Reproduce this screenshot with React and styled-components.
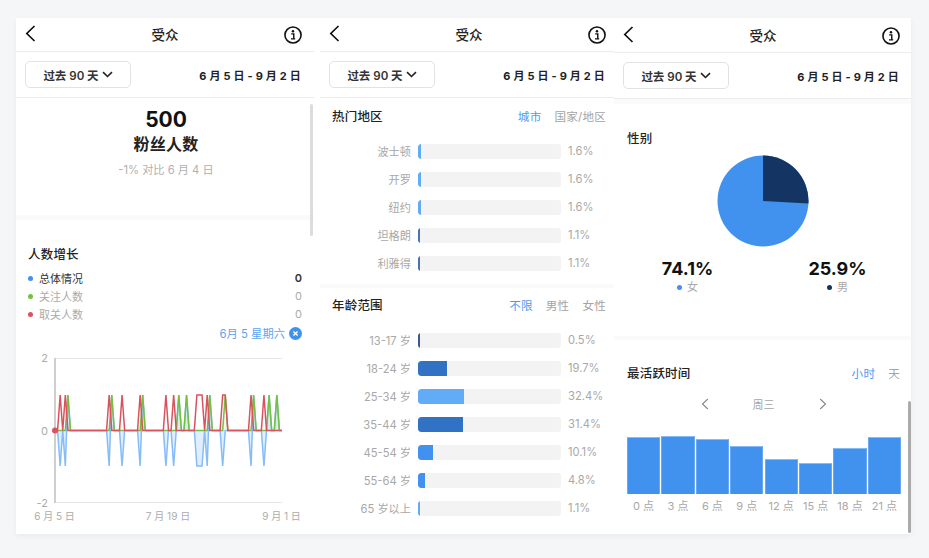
import React from 'react';
import styled, { createGlobalStyle } from 'styled-components';

const Global = createGlobalStyle`
  html, body { margin: 0; padding: 0; background: #f5f6f8; }
  body { font-family: Inter, "Noto Sans CJK SC", sans-serif; color: #262626; -webkit-font-smoothing: antialiased; }
  * { box-sizing: border-box; }
`;

const Page = styled.div`
  width: 929px; height: 558px; padding: 18px 18px 24px 16px; overflow: hidden;
`;
const Card = styled.div`
  position: relative; display: flex; width: 895px; height: 516px; background: #fff;
  box-shadow: 0 2px 6px rgba(0,0,0,.05); overflow: hidden;
`;
const Panel = styled.div`
  flex: none; width: ${p => p.$w}px; padding-top: ${p => p.$top || 0}px; overflow: hidden;
`;
const Screen = styled.div`
  width: 298px; display: flex; flex-direction: column;
`;
const Header = styled.div`
  height: 34px; border-bottom: 1px solid #ececec; display: flex; align-items: center;
  justify-content: space-between; padding: 0 12px 0 9px; position: relative;
`;
const BackSlot = styled.span`
  display: flex; margin-bottom: 3px;
`;
const HeaderTitle = styled.div`
  flex: 1; text-align: center; font-size: 13.5px; font-weight: 500; line-height: 20px; color: #222; padding-left: 10px;
`;
const FilterRow = styled.div`
  height: 46px; border-bottom: 1px solid #ececec; display: flex; align-items: center;
  justify-content: space-between; padding: 0 13px 0 9px;
`;
const RangeButton = styled.div`
  width: 106px; height: 27px; border: 1px solid #e2e2e2; border-radius: 5px; display: flex;
  align-items: center; justify-content: center; gap: 3px; font-size: 11.5px; font-weight: 600; color: #333;
`;
const DateRange = styled.div`
  font-size: 11px; font-weight: 700; letter-spacing: .2px; color: #222;
`;
const Summary = styled.section`
  height: 117px; padding: 10px 0 0 2px; text-align: center;
`;
const BigNumber = styled.div`
  font-size: 21px; font-weight: 700; line-height: 24px; color: #111;
`;
const BigLabel = styled.div`
  margin-top: 1px; font-size: 16px; font-weight: 600; line-height: 22px; letter-spacing: .3px; color: #222;
`;
const Delta = styled.div`
  margin-top: 7px; font-size: 11.2px; line-height: 16px; color: #b0b0b0;
`;
const Band = styled.div`
  height: ${p => p.$h}px; background: #fafafa; flex: none;
`;
const Section = styled.section`
  height: ${p => p.$h}px; padding: ${p => p.$pt}px 12px 0 ${p => p.$pl || 12}px; flex: none;
`;
const TitleRow = styled.div`
  display: flex; align-items: center; justify-content: space-between; height: 20px;
`;
const SectionTitle = styled.h3`
  margin: 0; font-size: 12.5px; font-weight: 500; line-height: 20px; color: #222; letter-spacing: .2px;
`;
const Tabs = styled.div`
  display: flex; gap: 13px;
`;
const Tab = styled.span`
  font-size: 11.6px; line-height: 20px; letter-spacing: .2px; color: ${p => p.$active ? '#4a9bf2' : '#a4a4a4'};
`;
const Legend = styled.div`
  margin-top: 4px;
`;
const LegendRow = styled.div`
  display: flex; align-items: center; height: 18px; font-size: 11px; color: ${p => p.$strong ? '#333' : '#aaa'};
`;
const Dot = styled.i`
  width: 5px; height: 5px; border-radius: 50%; background: ${p => p.$c}; margin-right: 6px; flex: none;
`;
const LegendValue = styled.span`
  margin-left: auto; font-size: 11px; font-weight: ${p => p.$strong ? 600 : 400};
`;
const Selected = styled.div`
  margin-top: 1px; height: 18px; display: flex; align-items: center; justify-content: flex-end; gap: 4px;
  font-size: 11.3px; color: #5ba4f3;
`;
const Clear = styled.svg`
  width: 13px; height: 13px; flex: none;
`;
const ChartSvg = styled.svg`
  display: block; width: 298px; height: 181px; margin: 3px -12px 0; overflow: visible;
`;
const Rows = styled.div`
  display: flex; flex-direction: column; gap: 13px; margin-top: ${p => p.$mt}px;
`;
const BarRow = styled.div`
  display: grid; grid-template-columns: 79px 143px auto; column-gap: 7px; align-items: center; height: 15px;
  font-size: 11.2px; color: #a8a8a8;
`;
const BarLabel = styled.span`
  text-align: right;
`;
const Track = styled.div`
  height: 15px; border-radius: 3px; background: #f3f3f4; overflow: hidden;
`;
const Fill = styled.div`
  height: 100%; background: ${p => p.$c}; border-radius: 3px 0 0 3px;
`;
const SubTitle = styled.div`
  height: 20px;
`;
const PieWrap = styled.div`
  display: flex; justify-content: center; margin: 6px 0 0 -1px;
`;
const Stats = styled.div`
  display: grid; grid-template-columns: 1fr 1fr; margin: 11px -12px 0 -13px;
`;
const Stat = styled.div`
  text-align: center; transform: translateX(${p => p.$dx}px);
`;
const StatValue = styled.div`
  font-size: 18px; font-weight: 700; line-height: 22px; color: #111;
`;
const StatLabel = styled.div`
  display: flex; align-items: center; justify-content: center; gap: 4px; font-size: 11px; line-height: 14px; color: #aaa;
`;
const SmallDot = styled.i`
  width: 5px; height: 5px; border-radius: 50%; background: ${p => p.$c}; margin-right: 1px;
`;
const DayNav = styled.div`
  margin-top: 10px; display: flex; align-items: center; justify-content: center; gap: 44px; height: 20px;
  font-size: 11px; color: #a6a6a6;
`;
const Bars = styled.div`
  margin-top: 20px; height: 60px; display: grid; grid-template-columns: repeat(8, 1fr); column-gap: 1.3px; align-items: end;
  margin-right: -1px;
`;
const Bar = styled.div`
  background: #4192ef; border-top: 1px solid #86bbf5; border-left: 1px solid #6aa9f2; border-right: 1px solid #6aa9f2;
`;
const BarTicks = styled.div`
  margin-top: 5px; display: grid; grid-template-columns: repeat(8, 1fr); column-gap: 1.3px; margin-right: -1px;
`;
const Tick = styled.span`
  text-align: center; font-size: 11px; line-height: 14px; color: #a8a8a8; white-space: nowrap;
`;
const ScrollThumb = styled.div`
  position: absolute; left: ${p => p.$x}px; top: ${p => p.$y}px; width: 3px; height: 132px;
  background: ${p => p.$c}; border-radius: 2px;
`;

const Back = () => (
  <svg width="11" height="17" viewBox="0 0 11 17" fill="none">
    <path d="M9.5 1 L1.8 8.5 L9.5 16" stroke="#111" strokeWidth="1.7" />
  </svg>
);
const InfoIcon = () => (
  <svg width="18" height="18" viewBox="0 0 19 19" fill="none">
    <circle cx="9.5" cy="9.5" r="8.5" stroke="#111" strokeWidth="1.7" />
    <circle cx="9.5" cy="5.6" r="1.3" fill="#111" />
    <path d="M7.6 8.3h2.7v5.1M7.4 13.6h4.4" stroke="#111" strokeWidth="1.5" />
  </svg>
);
const Chevron = () => (
  <svg width="11" height="7" viewBox="0 0 11 7" fill="none">
    <path d="M1 1.2 L5.5 5.5 L10 1.2" stroke="#222" strokeWidth="1.6" />
  </svg>
);
const NavArrow = ({ left }) => (
  <svg width="8" height="12" viewBox="0 0 8 12" fill="none">
    <path d={left ? 'M6.8 1 L1.5 6 L6.8 11' : 'M1.2 1 L6.5 6 L1.2 11'} stroke="#8b8b8b" strokeWidth="1.2" />
  </svg>
);

const TopBar = () => (
  <>
    <Header>
      <BackSlot><Back /></BackSlot>
      <HeaderTitle>受众</HeaderTitle>
      <InfoIcon />
    </Header>
    <FilterRow>
      <RangeButton>过去 90 天 <Chevron /></RangeButton>
      <DateRange>6 月 5 日 - 9 月 2 日</DateRange>
    </FilterRow>
  </>
);

const X0 = 39, STEP = 227 / 88, Y0 = 85.5, UNIT = 35.5;
const redIdx = [2, 4, 21, 26, 33, 43, 46, 55, 56, 57, 59, 65, 66, 76, 81];
const greenIdx = [5, 22, 34, 48, 51, 60, 66, 77, 83, 86];
const series = fn => Array.from({ length: 89 }, (_, i) => fn(i));
const green = series(i => greenIdx.includes(i) ? 1 : 0);
const red = series(i => redIdx.includes(i) ? 1 : 0);
const blue = series(i => green[i] - red[i]);
const px = i => X0 + i * STEP;
const line = (vals) => vals.map((v, i) => `${i ? 'L' : 'M'}${px(i).toFixed(2)} ${(Y0 - v * UNIT).toFixed(2)}`).join(' ');
const area = (vals) => `${line(vals)} L${px(88)} ${Y0} L${X0} ${Y0} Z`;

const GrowthChart = () => (
  <ChartSvg viewBox="0 0 298 181" fontFamily='Inter, "Noto Sans CJK SC", sans-serif' fontSize="10" fill="#ababab">
    <line x1="39" y1="13.5" x2="266" y2="13.5" stroke="#e6e6e6" />
    <line x1="39" y1="157.5" x2="266" y2="157.5" stroke="#e6e6e6" />
    <line x1="39" y1="13" x2="39" y2="158" stroke="#cfcfcf" strokeWidth="2" />
    <text x="32" y="17" textAnchor="end" fontSize="11">2</text>
    <text x="32" y="89.5" textAnchor="end" fontSize="11">0</text>
    <text x="32" y="161.5" textAnchor="end" fontSize="11">-2</text>
    <path d={area(green)} fill="rgba(114,194,62,.08)" />
    <path d={area(blue)} fill="rgba(133,189,248,.25)" />
    <path d={line(blue)} fill="none" stroke="#85bdf8" strokeWidth="1.5" />
    <path d={line(green)} fill="none" stroke="#73c23f" strokeWidth="1.5" />
    <path d={line(red)} fill="none" stroke="#d9535e" strokeWidth="1.5" />
    <circle cx="39" cy="85.5" r="3" fill="#d9535e" />
    <text x="38.5" y="174.5" textAnchor="middle">6 月 5 日</text>
    <text x="152" y="174.5" textAnchor="middle">7 月 19 日</text>
    <text x="265.5" y="174.5" textAnchor="middle">9 月 1 日</text>
  </ChartSvg>
);

const cities = [
  ['波士顿', 1.6, 3, '#62abf7'], ['开罗', 1.6, 3, '#62abf7'], ['纽约', 1.6, 3, '#62abf7'],
  ['坦格朗', 1.1, 2, '#4a72b0'], ['利雅得', 1.1, 2, '#4a72b0'],
];
const ages = [
  ['13-17 岁', 0.5, 2, '#3a5b8f'], ['18-24 岁', 19.7, 29, '#3272c4'], ['25-34 岁', 32.4, 46, '#62abf7'],
  ['35-44 岁', 31.4, 45, '#3272c4'], ['45-54 岁', 10.1, 14.5, '#4192ef'], ['55-64 岁', 4.8, 7, '#4192ef'],
  ['65 岁以上', 1.1, 2, '#62abf7'],
];
const hours = [['0 点', 57.5], ['3 点', 58], ['6 点', 55], ['9 点', 48], ['12 点', 35], ['15 点', 31], ['18 点', 46], ['21 点', 57]];

const BarList = ({ items, mt }) => (
  <Rows $mt={mt}>
    {items.map(([label, value, w, c]) => (
      <BarRow key={label}>
        <BarLabel>{label}</BarLabel>
        <Track><Fill $c={c} style={{ width: w }} /></Track>
        <span>{value}%</span>
      </BarRow>
    ))}
  </Rows>
);

export default function App() {
  return (
    <Page>
      <Global />
      <Card>
        <Panel $w={304}>
          <Screen>
            <TopBar />
            <Summary>
              <BigNumber>500</BigNumber>
              <BigLabel>粉丝人数</BigLabel>
              <Delta>-1% 对比 6 月 4 日</Delta>
            </Summary>
            <Band $h={5} />
            <Section $h={314} $pt={25}>
              <SectionTitle>人数增长</SectionTitle>
              <Legend>
                <LegendRow $strong><Dot $c="#4192ef" />总体情况<LegendValue $strong>0</LegendValue></LegendRow>
                <LegendRow><Dot $c="#73c23f" />关注人数<LegendValue>0</LegendValue></LegendRow>
                <LegendRow><Dot $c="#d9535e" />取关人数<LegendValue>0</LegendValue></LegendRow>
              </Legend>
              <Selected>
                6月 5 星期六
                <Clear viewBox="0 0 13 13">
                  <circle cx="6.5" cy="6.5" r="6.5" fill="#4192ef" />
                  <path d="M4.4 4.4l4.2 4.2M8.6 4.4l-4.2 4.2" stroke="#fff" strokeWidth="1.4" />
                </Clear>
              </Selected>
              <GrowthChart />
            </Section>
          </Screen>
        </Panel>
        <Panel $w={294}>
          <Screen>
            <TopBar />
            <Section $h={186} $pt={9}>
              <TitleRow>
                <SectionTitle>热门地区</SectionTitle>
                <Tabs><Tab $active>城市</Tab><Tab>国家/地区</Tab></Tabs>
              </TitleRow>
              <BarList items={cities} mt={16} />
            </Section>
            <Band $h={4} />
            <Section $h={246} $pt={8}>
              <TitleRow>
                <SectionTitle>年龄范围</SectionTitle>
                <Tabs><Tab $active>不限</Tab><Tab>男性</Tab><Tab>女性</Tab></Tabs>
              </TitleRow>
              <BarList items={ages} mt={16} />
            </Section>
          </Screen>
        </Panel>
        <Panel $w={297} $top={1}>
          <Screen>
            <TopBar />
            <Band $h={5} />
            <Section $h={232} $pt={25} $pl={13}>
              <SubTitle><SectionTitle>性别</SectionTitle></SubTitle>
              <PieWrap>
                <svg width="92" height="92" viewBox="-46 -46 92 92">
                  <circle r="45.5" fill="#4192ef" />
                  <path d="M0 0 L0 -45.5 A45.5 45.5 0 0 1 45.43 2.57 Z" fill="#143564" />
                </svg>
              </PieWrap>
              <Stats>
                <Stat $dx={-1}>
                  <StatValue>74.1%</StatValue>
                  <StatLabel><SmallDot $c="#4192ef" />女</StatLabel>
                </Stat>
                <Stat $dx={0}>
                  <StatValue>25.9%</StatValue>
                  <StatLabel><SmallDot $c="#143564" />男</StatLabel>
                </Stat>
              </Stats>
            </Section>
            <Band $h={4} />
            <Section $h={190} $pt={24} $pl={13}>
              <TitleRow>
                <SectionTitle>最活跃时间</SectionTitle>
                <Tabs><Tab $active>小时</Tab><Tab>天</Tab></Tabs>
              </TitleRow>
              <DayNav><NavArrow left /><span>周三</span><NavArrow /></DayNav>
              <Bars>
                {hours.map(([t, h]) => <Bar key={t} style={{ height: h }} />)}
              </Bars>
              <BarTicks>
                {hours.map(([t]) => <Tick key={t}>{t}</Tick>)}
              </BarTicks>
            </Section>
          </Screen>
        </Panel>
        <ScrollThumb $x={294} $y={86} $c="#dcdcdc" />
        <ScrollThumb $x={892} $y={383} $c="#ababab" />
      </Card>
    </Page>
  );
}
